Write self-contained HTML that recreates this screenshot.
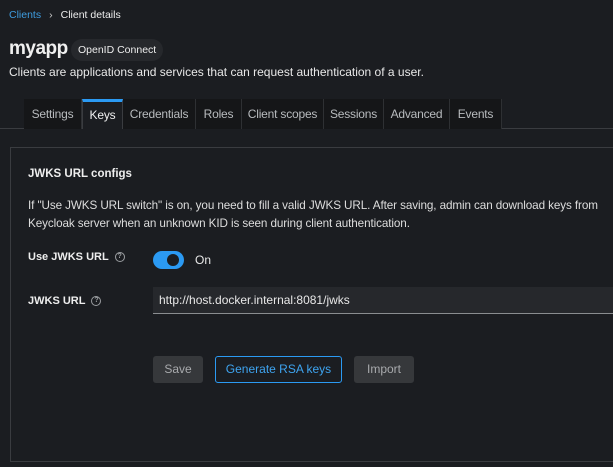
<!DOCTYPE html>
<html><head><style>
*{margin:0;padding:0;box-sizing:border-box}
body{width:613px;height:467px;background:#1b1d21;font-family:"Liberation Sans",sans-serif;color:#e0e0e0;position:relative;overflow:hidden;font-size:12px}
.a{position:absolute;white-space:nowrap}
.tab{position:absolute;top:99px;height:30px;background:#151618;border-right:1px solid #2e3033;color:#b8bbbe;font-size:12px;line-height:30px;text-align:center;letter-spacing:-0.2px}
.q{display:inline-block;width:10px;height:10px;border:1px solid #9a9da0;border-radius:50%;font-size:7px;line-height:8px;text-align:center;color:#9a9da0;vertical-align:middle;margin-left:6px}
.btn{position:absolute;top:356px;height:27px;border-radius:3px;font-size:12px;line-height:27px;text-align:center}
</style></head><body>
<div class="a" style="left:9px;top:9px;font-size:10.5px"><span style="color:#3e9de0">Clients</span><span style="color:#ccc;margin:0 8px">›</span><span style="color:#eee">Client details</span></div>
<div class="a" style="left:9px;top:38px;font-size:19px;font-weight:bold;color:#f0f0f0;letter-spacing:-0.5px">myapp</div>
<div class="a" style="left:71px;top:39px;height:22px;padding:0 7px;line-height:22px;background:#26282c;border-radius:11px;font-size:10.5px;color:#eee">OpenID Connect</div>
<div class="a" style="left:9px;top:65px;font-size:12px;color:#e8e8e8">Clients are applications and services that can request authentication of a user.</div>
<div class="a" style="left:0;top:128px;width:613px;height:1px;background:#3a3c40"></div>
<div class="tab" style="left:24px;width:58px">Settings</div>
<div class="tab" style="left:82px;width:41px;background:#1b1d21;border-top:3px solid #2b9af3;border-left:1px solid #3a3c40;border-right:1px solid #3a3c40;color:#f0f0f0;line-height:27px;height:30px">Keys</div>
<div class="tab" style="left:123px;width:73px">Credentials</div>
<div class="tab" style="left:196px;width:46px">Roles</div>
<div class="tab" style="left:242px;width:82px">Client scopes</div>
<div class="tab" style="left:324px;width:60px">Sessions</div>
<div class="tab" style="left:384px;width:66px">Advanced</div>
<div class="tab" style="left:450px;width:52px">Events</div>
<div class="a" style="left:10px;top:147px;width:620px;height:315px;border:1px solid #3a3c40;background:#1b1d21"></div>
<div class="a" style="left:28px;top:168px;font-size:11.5px;font-weight:bold;color:#eee">JWKS URL configs</div>
<div class="a" style="left:28px;top:197px;font-size:11.7px;color:#ddd;line-height:18px;letter-spacing:-0.1px">If "Use JWKS URL switch" is on, you need to fill a valid JWKS URL. After saving, admin can download keys from<br>Keycloak server when an unknown KID is seen during client authentication.</div>
<div class="a" style="left:28px;top:251px;font-size:11px;font-weight:bold;color:#eee">Use JWKS URL<span class="q">?</span></div>
<div class="a" style="left:153px;top:251px;width:31px;height:18px;border-radius:9px;background:#2b9af3"></div>
<div class="a" style="left:167px;top:254px;width:12px;height:12px;border-radius:50%;background:#1b1d21"></div>
<div class="a" style="left:195px;top:253px;font-size:12px;color:#e8e8e8">On</div>
<div class="a" style="left:28px;top:295px;font-size:11px;font-weight:bold;color:#eee">JWKS URL<span class="q">?</span></div>
<div class="a" style="left:153px;top:287px;width:470px;height:27px;background:#26282c;border-bottom:1px solid #8a8d90"></div>
<div class="a" style="left:159px;top:293px;font-size:12px;color:#e8e8e8">http://host.docker.internal:8081/jwks</div>
<div class="btn" style="left:153px;width:50px;background:#36383b;color:#a8aaad">Save</div>
<div class="btn" style="left:215px;width:127px;border:1px solid #2b9af3;color:#3ea4f0;line-height:25px">Generate RSA keys</div>
<div class="btn" style="left:354px;width:60px;background:#36383b;color:#a8aaad">Import</div>
</body></html>
